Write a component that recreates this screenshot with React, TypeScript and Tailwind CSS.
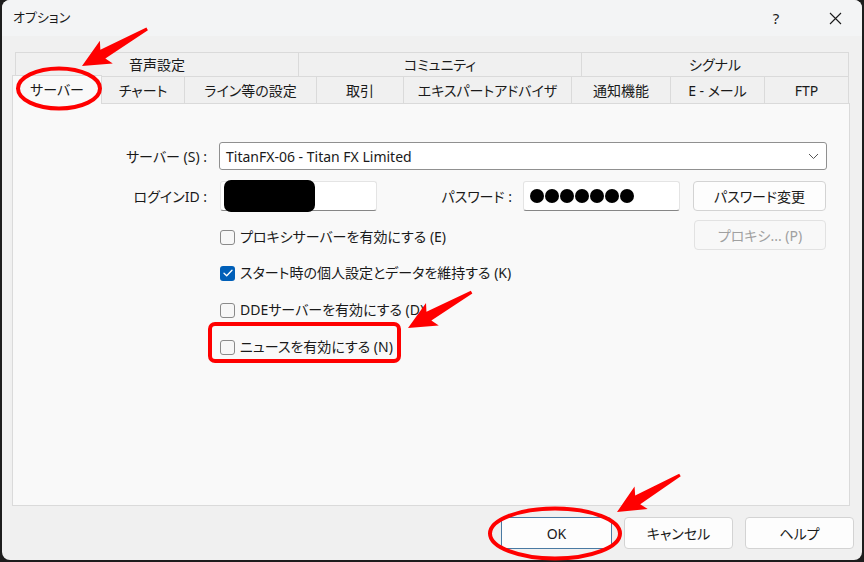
import { ReactNode } from 'react';

const FONT =
  "font-['Noto_Sans','Noto_Sans_CJK_JP',sans-serif] [font-feature-settings:'palt']";

const UPPER_TABS = [
  { label: '音声設定', w: 'w-[283px]' },
  { label: 'コミュニティ', w: 'w-[283px]' },
  { label: 'シグナル', w: 'w-[268px] border-r' },
];

const LOWER_TABS = [
  { label: 'チャート', w: 'w-[83px]' },
  { label: 'ライン等の設定', w: 'w-[132px]' },
  { label: '取引', w: 'w-[87px]' },
  { label: 'エキスパートアドバイザ', w: 'w-[168px]' },
  { label: '通知機能', w: 'w-[99px]' },
  { label: 'E - メール', w: 'w-[94px]' },
  { label: 'FTP', w: 'w-[84px]' },
];

function Checkbox({ checked, label }: { checked?: boolean; label: string }) {
  return (
    <div className="ml-[207px] flex items-center pt-[4px]">
      {checked ? (
        <span className="flex h-[15px] w-[15px] items-center justify-center rounded-[3px] bg-[#005fb8]">
          <svg width="10" height="8" viewBox="0 0 10 8" fill="none">
            <path
              d="M1 4.2 3.7 6.8 9 1.2"
              stroke="white"
              strokeWidth="1.3"
              strokeLinecap="round"
              strokeLinejoin="round"
            />
          </svg>
        </span>
      ) : (
        <span className="h-[15px] w-[15px] rounded-[3px] border border-[#8a8a8a] bg-[#f7f7f7]" />
      )}
      <span className="ml-[5px] text-[14px] leading-none">{label}</span>
    </div>
  );
}

function Button({
  children,
  className,
}: {
  children: ReactNode;
  className: string;
}) {
  return (
    <div
      className={`flex items-center justify-center rounded-[4px] border text-[14px] ${className}`}
    >
      {children}
    </div>
  );
}

function Arrow({
  x,
  y,
  angle,
  length,
}: {
  x: number;
  y: number;
  angle: number;
  length: number;
}) {
  const H = 28;
  const w = 13;
  const s = 5;
  const d = `M0 0 L${-H} ${-w} L${-H + 4} ${-s} L${-length} -1.5 L${-length} 1.5 L${-H + 4} ${s} L${-H} ${w} Z`;
  return (
    <path
      d={d}
      transform={`translate(${x} ${y}) rotate(${angle})`}
      fill="#ff0000"
    />
  );
}

export default function App() {
  return (
    <div
      className={`relative h-[562px] w-[864px] overflow-hidden bg-[#1d1d1d] text-[#1a1a1a] ${FONT}`}
    >
      <div className="ml-[2px] flex h-[560px] w-[860px] flex-col overflow-hidden rounded-[8px] bg-[#f0f0f0]">
        {/* title bar */}
        <div className="flex h-[36px] items-center bg-[#f3f4f5] pl-[11px]">
          <span className="text-[13px]">オプション</span>
          <span className="ml-auto w-[46px] text-center text-[15px]">?</span>
          <span className="ml-[13px] mr-[4px] flex w-[46px] justify-center">
            <svg width="13" height="13" viewBox="0 0 13 13">
              <path
                d="M1 1 12 12M12 1 1 12"
                stroke="#1a1a1a"
                strokeWidth="1.1"
              />
            </svg>
          </span>
        </div>

        {/* tabs + panel */}
        <div className="pl-[10px] pt-[16px]">
          <div className="ml-[3px] flex h-[25px]">
            {UPPER_TABS.map((tab) => (
              <div
                key={tab.label}
                className={`flex items-center justify-center border-b border-l border-t border-[#dadada] text-[14px] ${tab.w}`}
              >
                {tab.label}
              </div>
            ))}
          </div>
          <div className="flex h-[26px] items-end">
            <div className="relative z-10 -mb-px flex h-[29px] w-[90px] items-center justify-center border border-b-0 border-[#dadada] bg-[#f9f9f9] pb-[2px] text-[14px]">
              サーバー
            </div>
            {LOWER_TABS.map((tab) => (
              <div
                key={tab.label}
                className={`flex h-[26px] items-center justify-center border-r border-[#dadada] text-[14px] ${tab.w}`}
              >
                {tab.label}
              </div>
            ))}
          </div>

          <div className="h-[403px] w-[838px] border border-[#dadada] bg-[#f9f9f9] pt-[38px]">
            <div className="flex h-[28px] items-center">
              <span className="w-[194px] text-right text-[14px]">
                サーバー (S) :
              </span>
              <div className="ml-[12px] flex h-[28px] w-[608px] items-center rounded-[3px] border border-[#909090] bg-white pl-[6px] pr-[7px]">
                <span className="text-[14px]">TitanFX-06 - Titan FX Limited</span>
                <svg
                  className="ml-auto"
                  width="11"
                  height="7"
                  viewBox="0 0 11 7"
                  fill="none"
                >
                  <path d="M1 1 5.5 5.5 10 1" stroke="#555" strokeWidth="1" />
                </svg>
              </div>
            </div>

            <div className="mt-[11px] flex h-[30px] items-center">
              <span className="w-[194px] text-right text-[14px]">
                ログインID :
              </span>
              <div className="relative ml-[13px] h-[30px] w-[157px] rounded-[3px] border border-[#e4e4e4] border-b-[#868686] bg-white">
                <div className="absolute -top-[2px] left-[3px] h-[32px] w-[91px] rounded-[7px] bg-black" />
              </div>
              <span className="w-[135px] text-right text-[14px]">
                パスワード :
              </span>
              <div className="ml-[11px] flex h-[30px] w-[157px] items-center gap-[1px] rounded-[3px] border border-[#e4e4e4] border-b-[#868686] bg-white pl-[6px]">
                {[0, 1, 2, 3, 4, 5, 6].map((i) => (
                  <span
                    key={i}
                    className="h-[14px] w-[14px] rounded-full bg-black"
                  />
                ))}
              </div>
              <Button className="ml-[13px] h-[30px] w-[133px] border-[#d3d3d3] bg-[#fdfdfd]">
                パスワード変更
              </Button>
            </div>

            <div className="mt-[9px] flex h-[30px] items-center">
              <Checkbox label="プロキシサーバーを有効にする (E)" />
              <Button className="ml-auto mr-[23px] h-[30px] w-[132px] border-[#e2e2e2] bg-[#f8f8f8] text-[#a0a0a0]">
                プロキシ... (P)
              </Button>
            </div>
            <div className="mt-[6px] flex h-[30px] items-center">
              <Checkbox checked label="スタート時の個人設定とデータを維持する (K)" />
            </div>
            <div className="mt-[7px] flex h-[30px] items-center">
              <Checkbox label="DDEサーバーを有効にする (D)" />
            </div>
            <div className="mt-[7px] flex h-[30px] items-center">
              <Checkbox label="ニュースを有効にする (N)" />
            </div>
          </div>
        </div>

        {/* footer */}
        <div className="flex justify-end gap-[12px] pr-[8px] pt-[11px]">
          <Button className="h-[32px] w-[111px] border-[#4a7aa3] bg-[#fdfdfd]">
            OK
          </Button>
          <Button className="h-[32px] w-[109px] border-[#d3d3d3] bg-[#fdfdfd]">
            キャンセル
          </Button>
          <Button className="h-[32px] w-[109px] border-[#d3d3d3] bg-[#fdfdfd]">
            ヘルプ
          </Button>
        </div>
      </div>

      {/* annotations */}
      <svg
        className="pointer-events-none absolute inset-0 z-20"
        width="864"
        height="562"
        viewBox="0 0 864 562"
        fill="none"
      >
        <ellipse cx="59" cy="88.5" rx="41" ry="20" stroke="#ff0000" strokeWidth="4" />
        <Arrow x={82} y={66} angle={150.3} length={75} />
        <rect
          x="210"
          y="324"
          width="189"
          height="37"
          rx="5"
          stroke="#ff0000"
          strokeWidth="4"
        />
        <Arrow x={408} y={328} angle={150.6} length={73} />
        <ellipse cx="555" cy="533.5" rx="65" ry="25" stroke="#ff0000" strokeWidth="4" />
        <Arrow x={617} y={512} angle={149.6} length={73} />
      </svg>
    </div>
  );
}
